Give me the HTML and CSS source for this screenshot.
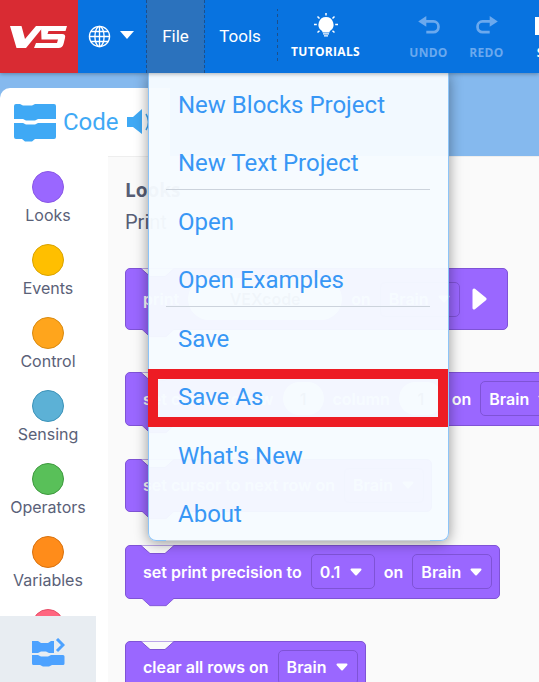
FILE: index.html
```html
<!DOCTYPE html>
<html lang="en">
<head>
<meta charset="utf-8">
<title>VEXcode V5</title>
<link rel="stylesheet" href="styles.css">
</head>
<body>
<svg class="sprite" aria-hidden="true">
  <symbol id="caret" viewBox="0 0 12 8"><path d="M1.500 1.500h9L6 6.500z" fill="#fff" stroke="#fff" stroke-width="2" stroke-linejoin="round"/></symbol>
  <symbol id="edge" viewBox="0 0 36 10"><path d="M0 0.500h1l9 8h15l9-8h2" fill="#fafafa" stroke="#7f53d6" stroke-width="1"/></symbol>
  <symbol id="tab" viewBox="0 0 36 10"><path d="M0 0h36l-9 8.500H9z" fill="#9a67ff"/><path d="M0 0.200l9 8.300h18l9-8.300" fill="none" stroke="#7f53d6" stroke-width="1"/></symbol>
</svg>
<div class="app">
  <header class="topbar">
    <div class="logo">
      <svg width="60" height="26" viewBox="0 0 60 26"><path d="M0 2h11.500l3.500 13 11-13h8l-18 22H6.500z" fill="#fff"/><path d="M31 2h26l-1.500 5H38.500l-1 3H52q4 0 3 4l-1.500 6q-1 4-5 4H24l2-5h21l1-3.500H31.500z" fill="#fff"/></svg>
    </div>
    <div class="lang">
      <svg class="globe" width="23" height="23" viewBox="0 0 24 24" fill="none" stroke="#fff" stroke-width="1.400"><circle cx="12" cy="12" r="10.500"/><ellipse cx="12" cy="12" rx="4.800" ry="10.500"/><path d="M12 1.500v21M1.500 12h21M3 6.800h18M3 17.200h18"/></svg>
      <svg class="lang-caret" width="14" height="8" viewBox="0 0 14 8"><path d="M0 0h14L7 8z" fill="#fff"/></svg>
    </div>
    <div class="nav nav-file">File</div>
    <div class="nav nav-tools">Tools</div>
    <div class="tool tool-tutorials">
      <svg width="24" height="24" viewBox="0 0 24 24" fill="#fff"><path d="M12 4a7.500 7.500 0 0 0-4.500 13.500c.8.600 1 1.200 1 2h7c0-.8.200-1.400 1-2A7.500 7.500 0 0 0 12 4zM9 20.300h6v1.200H9zM10 22.200h4v1.200h-4z"/><path d="M12 0v2.500M3.500 3.500l2 2M20.500 3.500l-2 2M0 11.500h2.800M21.200 11.500H24M3.500 19.500l2-1.800M20.500 19.500l-2-1.800" stroke="#fff" stroke-width="1.500" fill="none"/></svg>
      <span>TUTORIALS</span>
    </div>
    <div class="tool tool-dim tool-undo">
      <svg width="24" height="18" viewBox="0 0 24 20" fill="none"><path d="M0 6l9-6v12z" fill="#6ba9ee"/><path d="M7 6h10a5.500 5.500 0 0 1 5.500 5.500v1A5.500 5.500 0 0 1 17 18H9" stroke="#6ba9ee" stroke-width="3"/></svg>
      <span>UNDO</span>
    </div>
    <div class="tool tool-dim tool-redo">
      <svg width="24" height="18" viewBox="0 0 24 20" fill="none"><path d="M24 6l-9-6v12z" fill="#6ba9ee"/><path d="M17 6H7a5.500 5.500 0 0 0-5.500 5.500v1A5.500 5.500 0 0 0 7 18h8" stroke="#6ba9ee" stroke-width="3"/></svg>
      <span>REDO</span>
    </div>
    <div class="tool tool-save">
      <svg width="34" height="18" viewBox="0 0 34 18"><rect width="34" height="18" fill="#fff"/></svg>
      <span>SAVE</span>
    </div>
  </header>

  <div class="workspace">
    <div class="tabhead">
      <svg class="code-icon" width="42" height="38" viewBox="0 0 42 38"><path d="M0 2q0-2 2-2h4l3 1.500h9l3-1.500h19q2 0 2 2v13H24l-3 1.500h-9l-3-1.500H0z" fill="#3fa9f5"/><path d="M0 19h9l3 1.500h9l3-1.500h18v14q0 2-2 2H21l-3 2.500h-7L8 35H2q-2 0-2-2z" fill="#3fa9f5"/></svg>
      <span class="tab-label">Code</span>
      <svg class="speaker" width="28" height="26" viewBox="0 0 28 26" fill="none"><path d="M0 8h6l9-8v25l-9-7H0z" fill="#3fa9f5"/><path d="M19 5q5 8 0 16" stroke="#3fa9f5" stroke-width="1.500"/></svg>
    </div>
    <div class="panel">
      <nav class="sidebar">
        <div class="cat"><i class="dot dot-looks"></i><span>Looks</span></div>
        <div class="cat"><i class="dot dot-events"></i><span>Events</span></div>
        <div class="cat"><i class="dot dot-control"></i><span>Control</span></div>
        <div class="cat"><i class="dot dot-sensing"></i><span>Sensing</span></div>
        <div class="cat"><i class="dot dot-operators"></i><span>Operators</span></div>
        <div class="cat"><i class="dot dot-variables"></i><span>Variables</span></div>
        <div class="cat"><i class="dot dot-myblocks"></i><span>My Blocks</span></div>
      </nav>
      <section class="flyout">
        <h2 class="fly-title">Looks</h2>
        <p class="fly-sub">Print</p>

        <div class="block block-tall">
          <svg class="edge"><use href="#edge"/></svg>
          <span>print</span>
          <span class="pill pill-wide">VEXcode</span>
          <span>on</span>
          <span class="drop">Brain<svg class="caret"><use href="#caret"/></svg></span>
          <svg class="play" width="15" height="22" viewBox="0 0 15 22"><path d="M2 2l11 9L2 20z" fill="#fff" stroke="#fff" stroke-width="3" stroke-linejoin="round"/></svg>
          <svg class="tab"><use href="#tab"/></svg>
        </div>

        <div class="block block-wide gap-lg">
          <svg class="edge"><use href="#edge"/></svg>
          <span>set cursor to row</span>
          <span class="pill pill-num">1</span>
          <span>column</span>
          <span class="pill pill-num pill-num-last">1</span>
          <span>on</span>
          <span class="drop">Brain<svg class="caret"><use href="#caret"/></svg></span>
          <svg class="tab"><use href="#tab"/></svg>
        </div>

        <div class="block gap-sm">
          <svg class="edge"><use href="#edge"/></svg>
          <span>set cursor to next row on</span>
          <span class="drop">Brain<svg class="caret"><use href="#caret"/></svg></span>
          <svg class="tab"><use href="#tab"/></svg>
        </div>

        <div class="block gap-sm">
          <svg class="edge"><use href="#edge"/></svg>
          <span>set print precision to</span>
          <span class="drop drop-num">0.1<svg class="caret"><use href="#caret"/></svg></span>
          <span>on</span>
          <span class="drop">Brain<svg class="caret"><use href="#caret"/></svg></span>
          <svg class="tab"><use href="#tab"/></svg>
        </div>

        <div class="block gap-lg">
          <svg class="edge"><use href="#edge"/></svg>
          <span>clear all rows on</span>
          <span class="drop">Brain<svg class="caret"><use href="#caret"/></svg></span>
          <svg class="tab"><use href="#tab"/></svg>
        </div>
      </section>
    </div>
  </div>

  <div class="extensions">
    <svg width="33" height="29" viewBox="0 0 33 29"><path d="M0 3h6l3 2h7l3-2h3v12h-5l-3-1.500H9L6 15H0z" fill="#4da2ff"/><path d="M0 17h6l3 1.500h7l3-1.500h12q1.500 0 1.500 1.500v7q0 1.500-1.500 1.500H20l-3 1.500h-6L8 27H1.500Q0 27 0 25.500z" fill="#4da2ff"/><path d="M25 1l6 6-6 6" fill="none" stroke="#4da2ff" stroke-width="3"/></svg>
  </div>

  <div class="menu">
    <div class="menu-item">New Blocks Project</div>
    <div class="menu-item menu-item-rule">New Text Project</div>
    <div class="menu-item">Open</div>
    <div class="menu-item menu-item-rule">Open Examples</div>
    <div class="menu-item">Save</div>
    <div class="menu-item menu-item-marked">Save As</div>
    <div class="menu-item">What's New</div>
    <div class="menu-item menu-item-rule">About</div>
    <div class="highlight"></div>
  </div>
</div>
</body>
</html>
```

FILE: styles.css
```css
* { box-sizing: border-box; }
html, body { margin: 0; padding: 0; height: 100%; overflow: hidden; background: #fff; }
.sprite { display: none; }

.app {
  position: relative;
  width: 539px;
  height: 682px;
  overflow: hidden;
  display: flex;
  flex-direction: column;
  font-family: Inter, "Liberation Sans", sans-serif;
}

/* top bar */
.topbar {
  position: relative;
  z-index: 3;
  flex: none;
  height: 73px;
  display: flex;
  background: #0873e0;
  color: #fff;
  box-shadow: 0 1px 4px rgba(0, 0, 0, .3);
}
.logo {
  flex: none;
  width: 78px;
  background: #d92b33;
  display: flex;
  align-items: center;
  padding: 0 0 0 10px;
}
.lang {
  flex: none;
  width: 68px;
  display: flex;
  align-items: center;
  padding-left: 10px;
  gap: 9px;
}
.lang-caret { margin-top: -3px; }
.nav {
  flex: none;
  display: flex;
  align-items: center;
  justify-content: center;
  font: 400 17px Roboto, sans-serif;
  padding-bottom: 1px;
}
.nav-file {
  width: 59px;
  background: #2b72bd;
  border-left: 1px dashed #1c4f8c;
  border-right: 1px dashed #1c4f8c;
  background-clip: padding-box;
}
.nav-tools {
  width: 73px;
  border-right: 1px dashed #1c4f8c;
  border-image: repeating-linear-gradient(to bottom, #1c4f8c 0 3px, transparent 3px 6px) 1;
  margin-top: 9px;
  margin-bottom: 11px;
  padding: 0 2px 0 0;
}
.tool {
  flex: none;
  display: flex;
  flex-direction: column;
  align-items: center;
  justify-content: flex-start;
  padding-top: 13px;
  font: 700 12px "Open Sans", sans-serif;
  letter-spacing: .3px;
}
.tool-tutorials { width: 97px; gap: 6px; margin-left: -1px; }
.tool-undo { width: 59px; margin-left: 25px; padding-top: 16px; gap: 10px; }
.tool-redo { width: 57px; padding-top: 16px; gap: 10px; }
.tool-save { width: 36px; margin-left: 19px; padding-top: 17px; gap: 9px; }
.tool-dim { color: #6ba9ee; }

/* workspace */
.workspace {
  flex: 1;
  min-height: 0;
  display: flex;
  flex-direction: column;
  padding-top: 15px;
  background: #85b9ee;
}
.tabhead {
  flex: none;
  width: 170px;
  height: 68px;
  background: #fff;
  border-radius: 10px 0 0 0;
  display: flex;
  align-items: center;
  padding-left: 14px;
  color: #3fa9f5;
}
.code-icon { flex: none; margin-top: 2px; }
.tab-label {
  font: 400 24px Roboto, sans-serif;
  margin: 0 9px 0 7px;
}
.speaker { flex: none; margin-left: -1px; }

.panel {
  flex: 1;
  min-height: 0;
  display: flex;
  background: #fafafa;
  overflow: hidden;
}
.sidebar {
  flex: none;
  width: 108px;
  background: #fff;
  padding-top: 15px;
}
.cat {
  height: 73px;
  display: flex;
  flex-direction: column;
  align-items: center;
  width: 96px;
  color: #5a6178;
  font-size: 16px;
  line-height: 24px;
}
.dot {
  flex: none;
  display: block;
  width: 32px;
  height: 32px;
  border-radius: 50%;
  border: 1px solid;
}
.dot-looks { background: #9a67ff; border-color: #8a57e6; }
.dot-events { background: #ffbf00; border-color: #d9a300; }
.dot-control { background: #ffa51c; border-color: #d98a10; }
.dot-sensing { background: #5cb1d6; border-color: #3c93b9; }
.dot-operators { background: #59c059; border-color: #3f9a3f; }
.dot-variables { background: #ff8c1a; border-color: #d9720f; }
.dot-myblocks { background: #ff6680; border-color: #e64d67; }

.flyout {
  flex: 1;
  min-width: 0;
  padding: 21px 0 0 17px;
  border-top: 1px solid #eeeeee;
  color: #575e75;
}
.fly-title {
  margin: 0;
  font: 700 19px/24px "Open Sans", sans-serif;
  color: #575e75;
}
.fly-sub {
  margin: 8px 0 0;
  font: 400 20px/24px Roboto, sans-serif;
}

/* blocks */
.block {
  position: relative;
  width: max-content;
  height: 53.500px;
  display: flex;
  align-items: center;
  gap: 9px;
  padding: 0 7px 0 17px;
  background: #9a67ff;
  border: 1px solid #7f53d6;
  border-radius: 5px;
  color: #fff;
  font: 600 16px/20px Inter, sans-serif;
}
.block-tall { height: 62px; margin-top: 34px; padding-right: 20px; }
.block-wide { margin-right: -100px; }
.gap-lg { margin-top: 42px; }
.gap-sm { margin-top: 33px; }
.edge {
  position: absolute;
  left: 14px;
  top: -1px;
  width: 36px;
  height: 10px;
}
.tab {
  position: absolute;
  left: 14px;
  bottom: -9px;
  width: 36px;
  height: 9px;
}
.pill {
  display: flex;
  align-items: center;
  justify-content: center;
  background: #fff;
  color: #575e75;
  border-radius: 21px;
}
.pill-wide { width: 154px; height: 42px; }
.pill-num { width: 41px; height: 33px; }
.pill-num-last { width: 44px; }
.drop {
  display: flex;
  align-items: center;
  gap: 9px;
  height: 35px;
  padding: 0 9px 0 8px;
  border: 1px solid #7f53d6;
  border-radius: 5px;
}
.drop-num { width: 64px; gap: 10px; }
.caret { width: 12px; height: 8px; }
.play { margin-left: 3px; }

/* bottom-left overlay */
.extensions {
  position: absolute;
  left: 0;
  bottom: 0;
  width: 96px;
  height: 66px;
  background: #e8edf2;
  display: flex;
  align-items: center;
  justify-content: center;
  padding-top: 7px;
}

/* file menu */
.menu {
  position: absolute;
  z-index: 2;
  left: 148px;
  top: 73px;
  width: 301px;
  height: 468px;
  background: rgba(246, 251, 255, .965);
  border: 1px solid #8cc4f8;
  border-top: 0;
  border-radius: 0 0 8px 8px;
  box-shadow: 0 2px 14px rgba(0, 0, 0, .4);
}
.menu-item {
  position: relative;
  height: 58.500px;
  padding: 5.500px 0 0 29px;
  font: 400 24px/52.500px Roboto, sans-serif;
  color: #3897f5;
}
.menu-item-rule::after {
  content: "";
  position: absolute;
  left: 17px;
  right: 18px;
  bottom: 0;
  height: 1px;
  background: #ccd3dc;
}
.highlight {
  position: absolute;
  left: -1px;
  top: 296px;
  width: 300px;
  height: 58px;
  border: 10px solid #ed1c24;
}
```
